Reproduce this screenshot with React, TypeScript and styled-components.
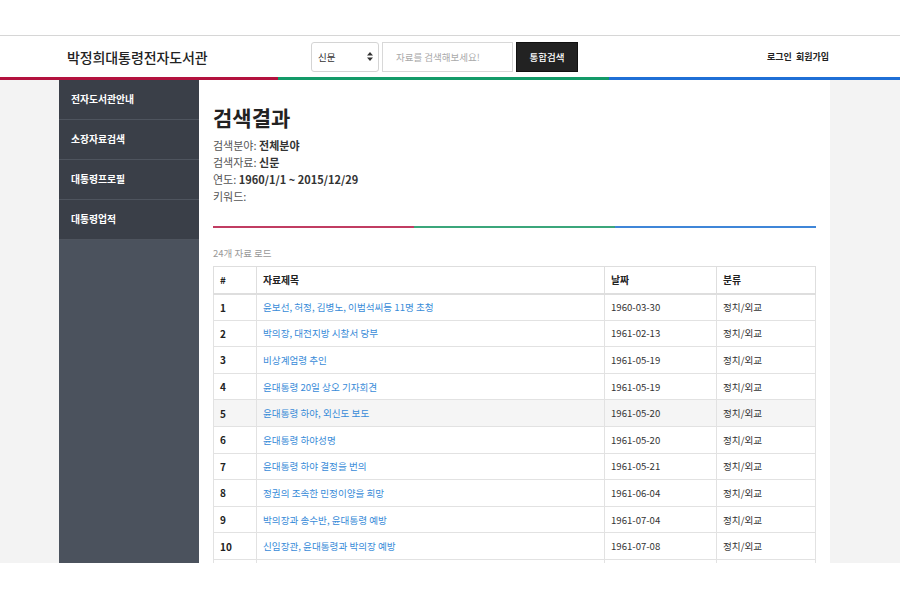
import React from "react";
import styled, { createGlobalStyle } from "styled-components";

const Global = createGlobalStyle`
  html, body { margin: 0; padding: 0; background: #fff; }
  body { font-family: "Noto Sans CJK KR", "Noto Sans", sans-serif; color: #333; }
  * { box-sizing: border-box; }
`;

const Frame = styled.div`
  height: 563px;
  overflow: hidden;
  display: flex;
  flex-direction: column;
  background: #f3f3f3;
`;

const TopGap = styled.div`
  height: 35px;
  background: #fff;
  flex: none;
`;

const Header = styled.header`
  flex: none;
  height: 42px;
  background: #fff;
  border-top: 1px solid #d6d6d6;
  display: grid;
  grid-template-columns: 244px auto 1fr;
  align-items: center;
  padding: 0 71px 0 67px;
`;

const Logo = styled.div`
  font-size: 14px;
  font-weight: 500;
  color: #222;
  letter-spacing: -0.1px;
`;

const SearchForm = styled.div`
  display: flex;
  align-items: center;
  gap: 3px;
`;

const Select = styled.div`
  width: 68px;
  height: 30px;
  border: 1px solid #d4d4d4;
  border-radius: 3px;
  display: flex;
  align-items: center;
  justify-content: space-between;
  padding: 0 5px 0 6px;
  font-size: 9.5px;
  color: #333;
`;

const Input = styled.div`
  width: 131px;
  height: 30px;
  border: 1px solid #d8d8d8;
  display: flex;
  align-items: center;
  padding-left: 13px;
  font-size: 9.5px;
  color: #aaa;
`;

const SearchButton = styled.button`
  width: 62px;
  height: 30px;
  background: #222;
  border: 1px solid #111;
  color: #fff;
  font-family: inherit;
  font-size: 9.5px;
  font-weight: 500;
  padding: 0;
`;

const UserLinks = styled.div`
  justify-self: end;
  display: flex;
  gap: 4px;
  font-size: 9px;
  font-weight: 700;
  color: #222;
`;

const ColorBar = styled.div`
  flex: none;
  height: 3px;
  display: flex;
`;

const Seg = styled.div<{ $c: string; $w?: number }>`
  background: ${(p) => p.$c};
  ${(p) => (p.$w ? `width: ${p.$w}px; flex: none;` : `flex: 1;`)}
`;

const Main = styled.div`
  flex: 1;
  display: flex;
  padding: 0 71px 0 59px;
  min-height: 0;
`;

const Sidebar = styled.nav`
  width: 140px;
  flex: none;
  background: #4b525d;
`;

const MenuItem = styled.div`
  height: 40px;
  background: #3a3f48;
  border-bottom: 1px solid #4e545e;
  display: flex;
  align-items: center;
  padding: 0 12px 1px;
  font-size: 9.8px;
  font-weight: 700;
  color: #fff;
`;

const Content = styled.main`
  flex: 1;
  background: #fff;
  padding: 22px 14px 0;
`;

const Title = styled.h1`
  margin: 0;
  font-size: 21px;
  line-height: 30px;
  font-weight: 700;
  color: #222;
`;

const Info = styled.div`
  margin-top: 5px;
  font-size: 11px;
  line-height: 17px;
  color: #555;
`;

const Val = styled.b`
  color: #333;
  font-weight: 700;
`;

const Divider = styled.div`
  margin-top: 21px;
  height: 2px;
  display: flex;
`;

const Count = styled.div`
  margin-top: 18px;
  font-size: 9.5px;
  line-height: 14px;
  color: #999;
`;

const Table = styled.table`
  margin-top: 6px;
  width: 602px;
  border-collapse: collapse;
  table-layout: fixed;
  font-size: 9.6px;
`;

const Th = styled.th<{ $w: number }>`
  width: ${(p) => p.$w}px;
  height: 27px;
  border: 1px solid #dedede;
  border-bottom: 2px solid #dedede;
  text-align: left;
  padding: 0 6px;
  font-size: 9.8px;
  font-weight: 700;
  color: #222;
`;

const Tr = styled.tr<{ $hl?: boolean }>`
  height: 26.6px;
  background: ${(p) => (p.$hl ? "#f5f5f5" : "#fff")};
`;

const Td = styled.td<{ $bold?: boolean }>`
  border: 1px solid #e2e2e2;
  padding: 0 6px;
  color: ${(p) => (p.$bold ? "#222" : "#333")};
  font-weight: ${(p) => (p.$bold ? 700 : 400)};
  font-size: ${(p) => (p.$bold ? "10px" : "inherit")};
  white-space: nowrap;
  overflow: hidden;
`;

const Link = styled.a`
  color: #388bd8;
  text-decoration: none;
`;

const rows = [
  ["윤보선, 허정, 김병노, 이범석씨등 11명 초청", "1960-03-30"],
  ["박의장, 대전지방 시찰서 당부", "1961-02-13"],
  ["비상계엄령 추인", "1961-05-19"],
  ["윤대통령 20일 상오 기자회견", "1961-05-19"],
  ["윤대통령 하야, 외신도 보도", "1961-05-20"],
  ["윤대통령 하야성명", "1961-05-20"],
  ["윤대통령 하야 결정을 번의", "1961-05-21"],
  ["정권의 조속한 민정이양을 희망", "1961-06-04"],
  ["박의장과 송수반, 윤대통령 예방", "1961-07-04"],
  ["신임장관, 윤대통령과 박의장 예방", "1961-07-08"],
  ["박의장, 윤대통령 예방", "1961-07-10"],
];

const SortArrows = () => (
  <svg width="6" height="9" viewBox="0 0 6 9">
    <path d="M3 0 L6 3.5 L0 3.5 Z M3 9 L6 5.5 L0 5.5 Z" fill="#333" />
  </svg>
);

export default function App() {
  return (
    <>
      <Global />
      <Frame>
        <TopGap />
        <Header>
          <Logo>박정희대통령전자도서관</Logo>
          <SearchForm>
            <Select>
              <span>신문</span>
              <SortArrows />
            </Select>
            <Input>자료를 검색해보세요!</Input>
            <SearchButton>통합검색</SearchButton>
          </SearchForm>
          <UserLinks>
            <span>로그인</span>
            <span>회원가입</span>
          </UserLinks>
        </Header>
        <ColorBar>
          <Seg $c="#b3123e" $w={278} />
          <Seg $c="#139a68" $w={331} />
          <Seg $c="#1f6fd6" />
        </ColorBar>
        <Main>
          <Sidebar>
            <MenuItem>전자도서관안내</MenuItem>
            <MenuItem>소장자료검색</MenuItem>
            <MenuItem>대통령프로필</MenuItem>
            <MenuItem>대통령업적</MenuItem>
          </Sidebar>
          <Content>
            <Title>검색결과</Title>
            <Info>
              <div>
                검색분야: <Val>전체분야</Val>
              </div>
              <div>
                검색자료: <Val>신문</Val>
              </div>
              <div>
                연도: <Val>1960/1/1 ~ 2015/12/29</Val>
              </div>
              <div>키워드:</div>
            </Info>
            <Divider>
              <Seg $c="#c13c62" />
              <Seg $c="#3ba67b" />
              <Seg $c="#3f86d8" />
            </Divider>
            <Count>24개 자료 로드</Count>
            <Table>
              <thead>
                <tr>
                  <Th $w={43}>#</Th>
                  <Th $w={348}>자료제목</Th>
                  <Th $w={112}>날짜</Th>
                  <Th $w={99}>분류</Th>
                </tr>
              </thead>
              <tbody>
                {rows.map(([title, date], i) => (
                  <Tr key={i} $hl={i === 4}>
                    <Td $bold>{i + 1}</Td>
                    <Td>
                      <Link href="#">{title}</Link>
                    </Td>
                    <Td>{date}</Td>
                    <Td>정치/외교</Td>
                  </Tr>
                ))}
              </tbody>
            </Table>
          </Content>
        </Main>
      </Frame>
    </>
  );
}
